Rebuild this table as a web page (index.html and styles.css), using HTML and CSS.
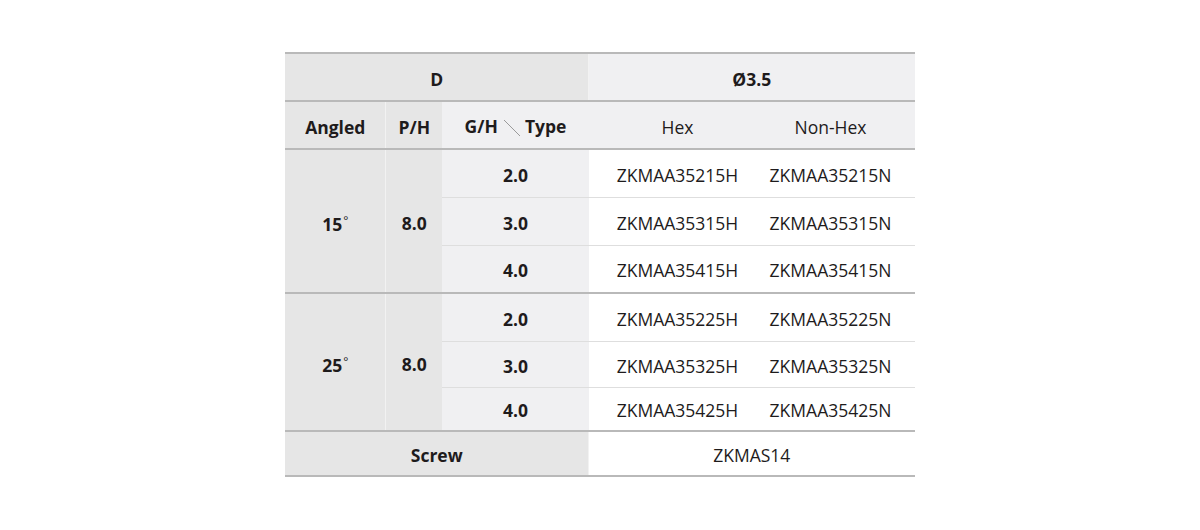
FILE: index.html
```html
<!DOCTYPE html>
<html lang="en">
<head>
<meta charset="utf-8">
<title>ZKMAA Angled Abutment</title>
<link rel="stylesheet" href="styles.css">
</head>
<body>
<table class="spec">
  <colgroup>
    <col class="c-angle"><col class="c-ph"><col class="c-gh"><col class="c-hex"><col class="c-non">
  </colgroup>
  <tr class="r-top">
    <th colspan="3" class="dark sep-r">D</th>
    <th colspan="2" class="light">Ø3.5</th>
  </tr>
  <tr class="r-head">
    <th class="dark sep-r">Angled</th>
    <th class="dark">P/H</th>
    <th class="light">G/H<svg class="diag" width="18" height="18" viewBox="0 0 18 18"><line x1="1" y1="1" x2="17" y2="17" stroke="#9a9a9a" stroke-width="1"/></svg>Type</th>
    <th class="light reg">Hex</th>
    <th class="light reg non">Non-Hex</th>
  </tr>
  <tr class="r-data grp-start">
    <th rowspan="3" class="dark sep-r">15<span class="deg">°</span></th>
    <th rowspan="3" class="dark">8.0</th>
    <th class="light">2.0</th>
    <td>ZKMAA35215H</td>
    <td class="non">ZKMAA35215N</td>
  </tr>
  <tr class="r-data minor">
    <th class="light">3.0</th>
    <td>ZKMAA35315H</td>
    <td class="non">ZKMAA35315N</td>
  </tr>
  <tr class="r-data minor">
    <th class="light">4.0</th>
    <td>ZKMAA35415H</td>
    <td class="non">ZKMAA35415N</td>
  </tr>
  <tr class="r-data grp-start">
    <th rowspan="3" class="dark sep-r">25<span class="deg">°</span></th>
    <th rowspan="3" class="dark">8.0</th>
    <th class="light">2.0</th>
    <td>ZKMAA35225H</td>
    <td class="non">ZKMAA35225N</td>
  </tr>
  <tr class="r-data minor r-b">
    <th class="light">3.0</th>
    <td>ZKMAA35325H</td>
    <td class="non">ZKMAA35325N</td>
  </tr>
  <tr class="r-data minor r-c">
    <th class="light">4.0</th>
    <td>ZKMAA35425H</td>
    <td class="non">ZKMAA35425N</td>
  </tr>
  <tr class="r-screw">
    <th colspan="3" class="dark sep-r">Screw</th>
    <td colspan="2">ZKMAS14</td>
  </tr>
</table>
</body>
</html>
```

FILE: styles.css
```css
html, body {
  margin: 0;
  padding: 0;
  background: #ffffff;
}

body {
  padding-top: 52px;
  font-family: "Open Sans", "Noto Sans", sans-serif;
  color: #1e1b1c;
}

.spec {
  margin: 0 auto;
  width: 629px;
  border-collapse: collapse;
  table-layout: fixed;
  font-size: 17.5px;
  border-top: 2px solid #b9b9b9;
  border-bottom: 2px solid #b9b9b9;
}

.c-angle { width: 100px; }
.c-ph { width: 57px; }
.c-gh { width: 146px; }
.c-hex { width: 178px; }
.c-non { width: 148px; }

.spec th,
.spec td {
  padding: 3px 0 0;
  text-align: center;
  vertical-align: middle;
  line-height: 20px;
}

.spec th.non,
.spec td.non {
  padding-right: 20px;
}

.spec th {
  font-weight: 700;
}

.spec td,
.spec th.reg {
  font-weight: 400;
}

.dark { background: #e6e6e6; }
.light { background: #f0f0f2; }
.spec td { background: #ffffff; }

.sep-r { border-right: 1px solid #f2f2f2; }

.r-top { height: 48px; }
.r-head { height: 48px; border-top: 2px solid #b9b9b9; }
.r-data { height: 48px; }
.r-b { height: 46px; }
.r-c { height: 44px; }
.r-screw { height: 45px; border-top: 2px solid #b9b9b9; }

.grp-start { border-top: 2px solid #b9b9b9; }
.minor th.light,
.minor td { border-top: 1px solid #dedede; }

.diag {
  vertical-align: -4px;
  margin: 0 4px 0 5px;
}

.deg {
  font-weight: 400;
  font-size: 12px;
  vertical-align: 6px;
  margin-left: 1px;
}
```
